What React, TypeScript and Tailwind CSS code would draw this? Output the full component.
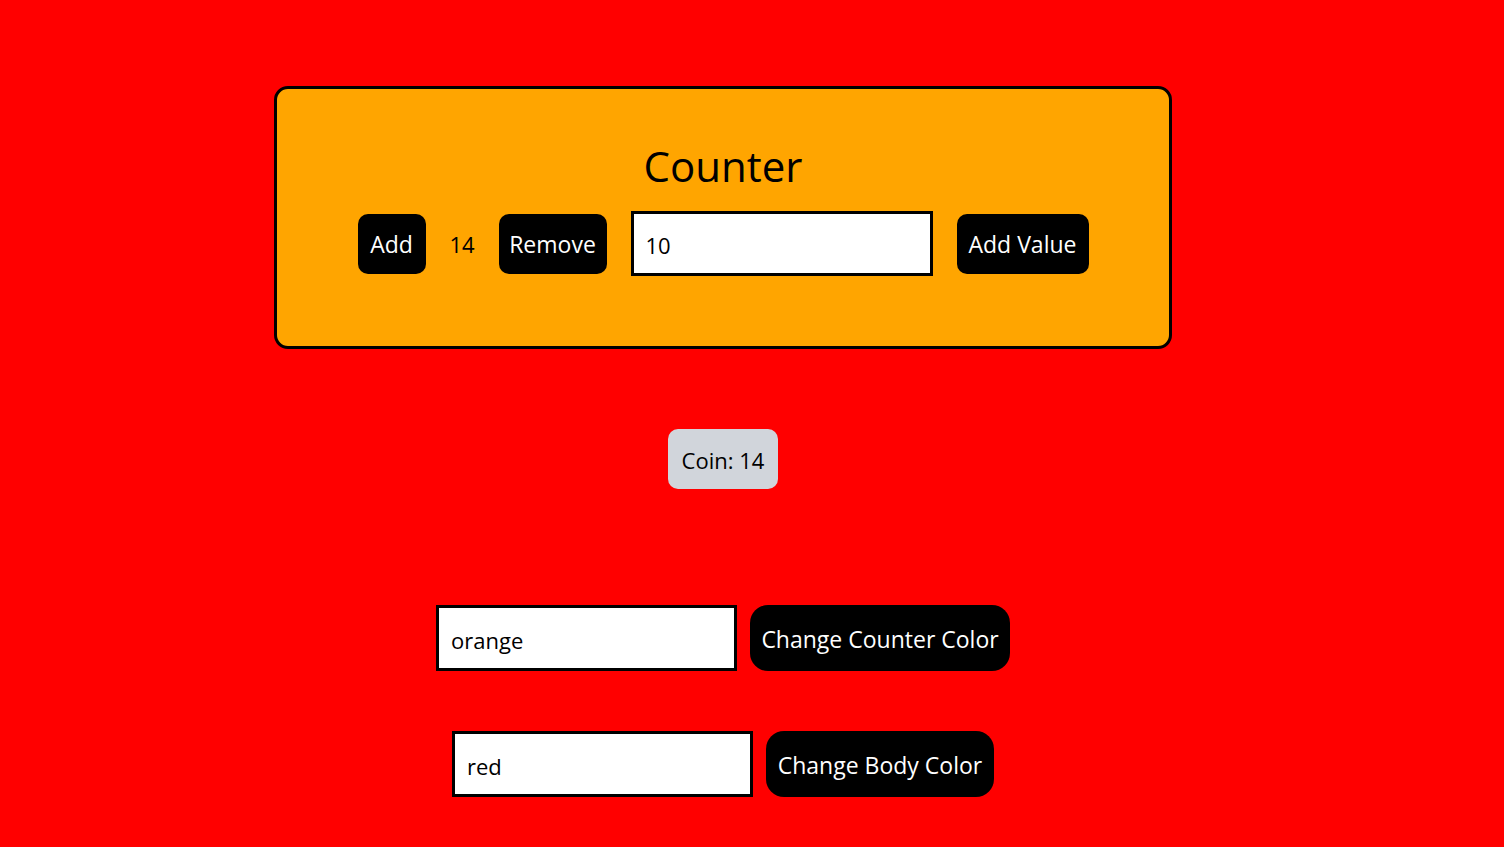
const font = { fontFamily: '"Open Sans", "Noto Sans", sans-serif' }

function BlackButton({ label, className }: { label: string; className: string }) {
    return (
        <button className={`flex items-center justify-center bg-black text-white whitespace-nowrap text-[23px] pt-[2px] ${className}`}>
            {label}
        </button>
    )
}

function TextBox({ value, className }: { value: string; className: string }) {
    return (
        <input
            readOnly
            value={value}
            className={`bg-white border-[3px] border-black text-black text-[22px] pl-3 pt-[3px] outline-none ${className}`}
            style={font}
        />
    )
}

export default function App() {
    return (
        <div className="min-h-[847px] w-full bg-[#ff0000] text-black" style={font}>
            <div className="w-[1446px] flex flex-col items-center pt-[86px]">
                <div className="w-[898px] h-[263px] bg-[#ffa500] border-[3px] border-black rounded-[14px] flex flex-col items-center pt-[52px]">
                    <h1 className="text-[42px] leading-[50px]">Counter</h1>
                    <div className="flex items-center gap-6 mt-[20px]">
                        <BlackButton label="Add" className="w-[68px] h-[60px] rounded-[10px]" />
                        <span className="text-[22px] w-[25px] text-center pt-[2px]">14</span>
                        <BlackButton label="Remove" className="w-[108px] h-[60px] rounded-[10px]" />
                        <TextBox value="10" className="w-[302px] h-[65px]" />
                        <BlackButton label="Add Value" className="w-[132px] h-[60px] rounded-[10px]" />
                    </div>
                </div>

                <div className="mt-[80px] w-[110px] h-[60px] rounded-[10px] bg-[#d1d5db] flex items-center justify-center text-[22px] pt-[3px] whitespace-nowrap">
                    Coin: 14
                </div>

                <div className="mt-[116px] flex items-center gap-[13px]">
                    <TextBox value="orange" className="w-[301px] h-[66px]" />
                    <BlackButton label="Change Counter Color" className="w-[260px] h-[66px] rounded-[18px]" />
                </div>

                <div className="mt-[60px] flex items-center gap-[13px]">
                    <TextBox value="red" className="w-[301px] h-[66px]" />
                    <BlackButton label="Change Body Color" className="w-[228px] h-[66px] rounded-[18px]" />
                </div>
            </div>
        </div>
    )
}
